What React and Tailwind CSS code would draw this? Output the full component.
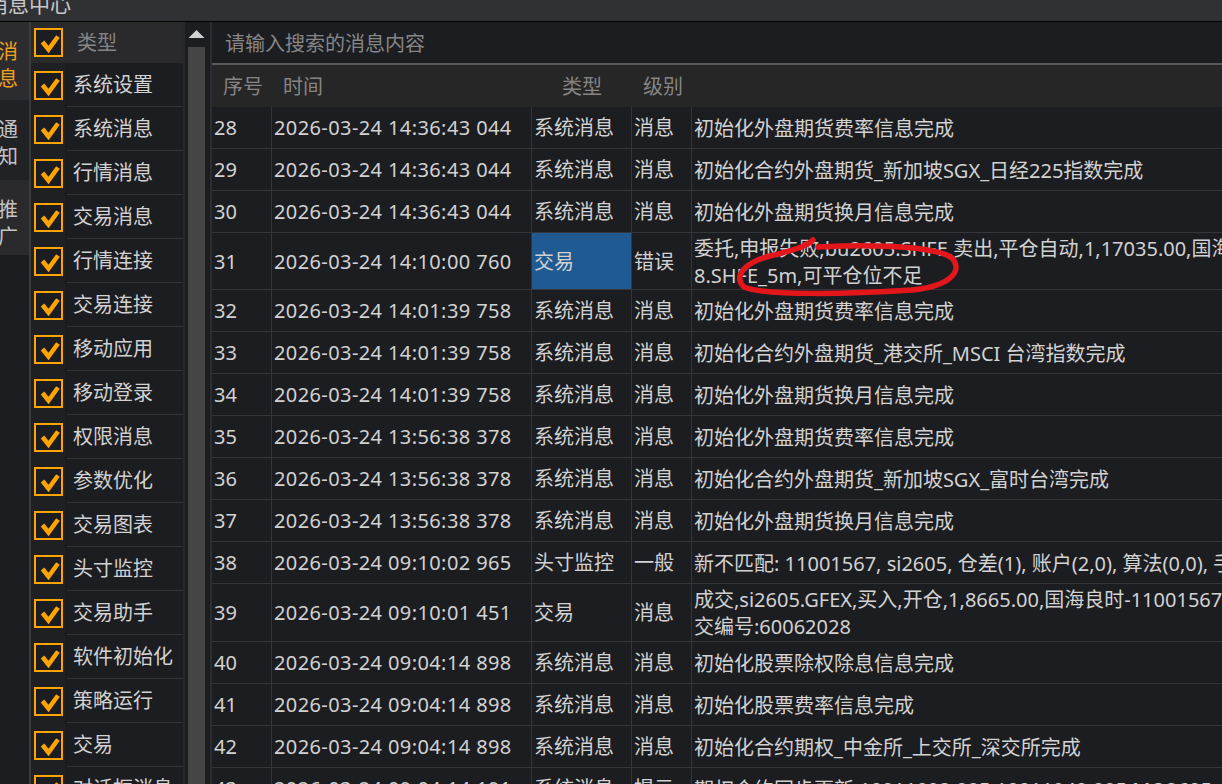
import React from 'react';

const categories = [
  '系统设置', '系统消息', '行情消息', '交易消息', '行情连接', '交易连接', '移动应用',
  '移动登录', '权限消息', '参数优化', '交易图表', '头寸监控', '交易助手', '软件初始化',
  '策略运行', '交易', '对话框消息',
];

const rows = [
  { id: 28, time: '2026-03-24 14:36:43 044', type: '系统消息', level: '消息', text: ['初始化外盘期货费率信息完成'] },
  { id: 29, time: '2026-03-24 14:36:43 044', type: '系统消息', level: '消息', text: ['初始化合约外盘期货_新加坡SGX_日经225指数完成'] },
  { id: 30, time: '2026-03-24 14:36:43 044', type: '系统消息', level: '消息', text: ['初始化外盘期货换月信息完成'] },
  { id: 31, time: '2026-03-24 14:10:00 760', type: '交易', level: '错误', selected: true, h: 'h-[57px]',
    text: ['委托,申报失败,bu2605.SHFE,卖出,平仓自动,1,17035.00,国海良时-11001567-bu260', '8.SHFE_5m,可平仓位不足'] },
  { id: 32, time: '2026-03-24 14:01:39 758', type: '系统消息', level: '消息', text: ['初始化外盘期货费率信息完成'] },
  { id: 33, time: '2026-03-24 14:01:39 758', type: '系统消息', level: '消息', text: ['初始化合约外盘期货_港交所_MSCI 台湾指数完成'] },
  { id: 34, time: '2026-03-24 14:01:39 758', type: '系统消息', level: '消息', text: ['初始化外盘期货换月信息完成'] },
  { id: 35, time: '2026-03-24 13:56:38 378', type: '系统消息', level: '消息', text: ['初始化外盘期货费率信息完成'] },
  { id: 36, time: '2026-03-24 13:56:38 378', type: '系统消息', level: '消息', text: ['初始化合约外盘期货_新加坡SGX_富时台湾完成'] },
  { id: 37, time: '2026-03-24 13:56:38 378', type: '系统消息', level: '消息', text: ['初始化外盘期货换月信息完成'] },
  { id: 38, time: '2026-03-24 09:10:02 965', type: '头寸监控', level: '一般', text: ['新不匹配: 11001567, si2605, 仓差(1), 账户(2,0), 算法(0,0), 手动(0,0)'] },
  { id: 39, time: '2026-03-24 09:10:01 451', type: '交易', level: '消息', h: 'h-[58px]',
    text: ['成交,si2605.GFEX,买入,开仓,1,8665.00,国海良时-11001567-si2605.GFEX_1m,成', '交编号:60062028'] },
  { id: 40, time: '2026-03-24 09:04:14 898', type: '系统消息', level: '消息', text: ['初始化股票除权除息信息完成'] },
  { id: 41, time: '2026-03-24 09:04:14 898', type: '系统消息', level: '消息', text: ['初始化股票费率信息完成'] },
  { id: 42, time: '2026-03-24 09:04:14 898', type: '系统消息', level: '消息', text: ['初始化合约期权_中金所_上交所_深交所完成'] },
  { id: 43, time: '2026-03-24 09:04:14 191', type: '系统消息', level: '提示', text: ['期权合约同步更新 10011892,885,10011940,885,MO2605'] },
];

const Check = () => (
  <div className="w-[29px] h-[29px] border-2 border-[#ffa400] bg-[#1c1d21] shrink-0">
    <svg width="25" height="25" viewBox="0 0 25 25">
      <polyline points="6.5,12 12.5,19.5 22,6.5" fill="none" stroke="#ffa400" strokeWidth="4.5" />
    </svg>
  </div>
);

const Tab = ({ chars, active, h }) => (
  <div className={`${h} pt-[16px] -ml-[2px] text-[20px] leading-[27px] ${active ? 'bg-[#2c2c2f] text-[#f0a023]' : 'text-[#c4c4c4]'}`}>
    {chars.map((c) => <div key={c}>{c}</div>)}
  </div>
);

export default function App() {
  return (
    <div className="w-[1222px] h-[784px] overflow-hidden bg-[#1c1d21] flex flex-col text-[#d2d2d2] font-[family-name:Noto_Sans,Noto_Sans_CJK_SC,sans-serif] relative">
      {/* title bar */}
      <div className="h-[22px] shrink-0 bg-[#303135] border-b border-black overflow-hidden">
        <div className="-mt-[10px] -ml-[13px] text-[21px] leading-[28px] text-[#c8c8c8] whitespace-nowrap">消息中心</div>
      </div>

      <div className="flex flex-1 min-h-0">
        {/* vertical tabs */}
        <div className="w-[31px] shrink-0 border-r-2 border-[#3b3b3d] overflow-hidden">
          <Tab chars={['消', '息']} active h="h-[78px]" />
          <div className="bg-[#212226]"><Tab chars={['通', '知']} h="h-[80px]" /></div>
          <div className="bg-[#2a2a2d]"><Tab chars={['推', '广']} h="h-[75px]" /></div>
        </div>

        {/* category list */}
        <div className="w-[154px] shrink-0 border-r-2 border-[#27282b] overflow-hidden">
          <div className="h-[41px] bg-[#2a2a2d] flex items-center">
            <div className="w-[34px] pl-[3px] flex items-center"><Check /></div>
            <div className="pl-[12px] text-[20px] text-[#858585]">类型</div>
          </div>
          {categories.map((c) => (
            <div key={c} className="h-[44px] flex">
              <div className="w-[34px] pl-[3px] flex items-center bg-[#1f2023]"><Check /></div>
              <div className="flex-1 ml-[2px] border-b border-[#333438] flex items-center pl-[6px] text-[20px] whitespace-nowrap">{c}</div>
            </div>
          ))}
        </div>

        {/* scrollbar */}
        <div className="w-[27px] shrink-0 border-r-2 border-[#2c2d31] flex flex-col items-center pl-[2px] pr-[4px]">
          <svg width="17" height="25" viewBox="0 0 17 25" className="shrink-0">
            <polygon points="0.5,16 16.5,16 8.5,8" fill="#d0d0d0" />
          </svg>
          <div className="w-[17px] flex-1 bg-[#454545]" />
        </div>

        {/* main panel */}
        <div className="flex-1 min-w-0 flex flex-col overflow-hidden">
          <div className="h-[43px] shrink-0 border-b-2 border-[#5a5a5a] flex items-center pl-[13px] pt-[3px] text-[20px] text-[#868686]">
            请输入搜索的消息内容
          </div>
          <div className="h-[42px] shrink-0 bg-[#262626] grid grid-cols-[59px_260px_100px_60px_1fr] items-center pt-[2px] text-[20px] text-[#858585]">
            <div className="pl-[11px]">序号</div>
            <div className="pl-[12px]">时间</div>
            <div className="pl-[31px]">类型</div>
            <div className="pl-[12px]">级别</div>
            <div />
          </div>
          {rows.map((r) => (
            <div key={r.id} className={`${r.h || 'h-[42px]'} shrink-0 border-b border-[#35363a] grid grid-cols-[59px_260px_100px_60px_1fr] text-[20px] whitespace-nowrap`}>
              <div className="pl-[2px] pt-[1px] flex items-center">{r.id}</div>
              <div className="pl-[2px] pt-[1px] flex items-center border-l border-[#35363a] tracking-[0.4px]">{r.time}</div>
              <div className={`pl-[2px] pt-[1px] flex items-center border-l border-[#35363a] ${r.selected ? 'bg-[#1f5a92]' : ''}`}>{r.type}</div>
              <div className="pl-[2px] pt-[1px] flex items-center border-l border-[#35363a]">{r.level}</div>
              <div className="pl-[2px] pt-[1px] flex flex-col justify-center border-l border-[#35363a] overflow-hidden leading-[27px]">
                {r.text.map((t) => <div key={t}>{t}</div>)}
              </div>
            </div>
          ))}
        </div>
      </div>

      {/* red hand-drawn annotation */}
      <svg className="absolute left-0 top-0 pointer-events-none" width="1222" height="784">
        <path
          d="M813 240 C806 247 790 251 770 256 C746 262 732 276 744 287 C764 296 850 294 912 290 C952 286 963 270 952 258 C937 247 884 245 842 246 L818 247"
          fill="none" stroke="#e3171b" strokeWidth="5.5" strokeLinecap="round" strokeLinejoin="round"
        />
      </svg>
    </div>
  );
}
